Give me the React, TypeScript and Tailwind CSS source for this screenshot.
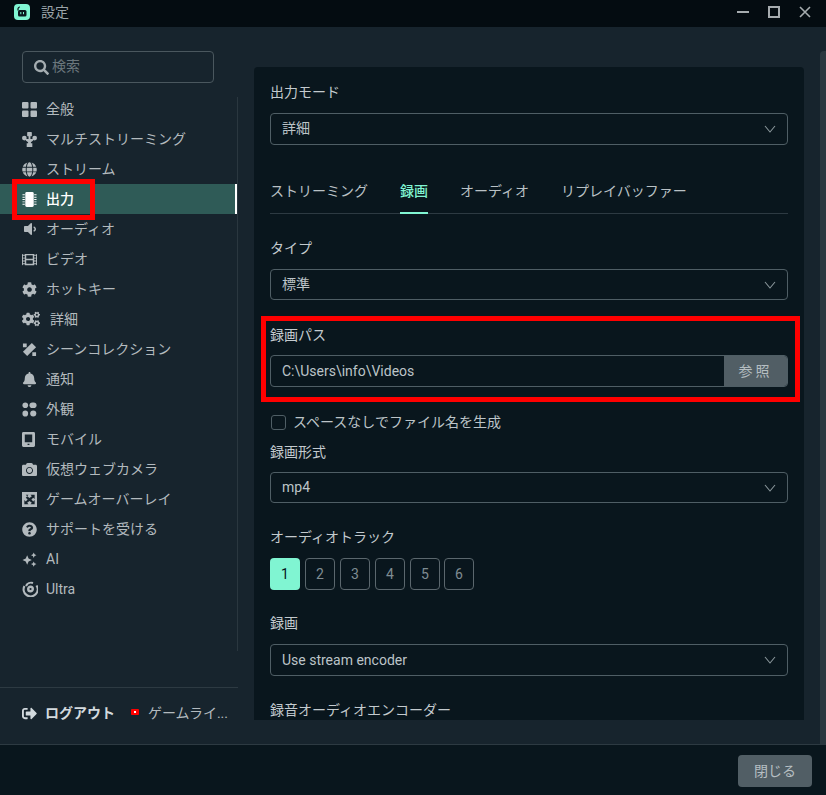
import type { ReactNode } from "react";
import {
  FaBell,
  FaCamera,
  FaCog,
  FaCogs,
  FaFilm,
  FaGlobe,
  FaQuestionCircle,
  FaSearch,
  FaSignOutAlt,
  FaVolumeDown,
} from "react-icons/fa";

const font = "font-['Roboto','Noto_Sans_CJK_JP',sans-serif]";

function General() {
  return (
    <svg viewBox="0 0 15 15" className="h-[15px] w-[15px]" fill="currentColor">
      <rect x="0" y="0" width="6.500" height="6.500" rx="1" />
      <rect x="8.500" y="0" width="6.500" height="6.500" rx="1" />
      <rect x="0" y="8.500" width="6.500" height="6.500" rx="1" />
      <rect x="8.500" y="8.500" width="6.500" height="6.500" rx="1" />
    </svg>
  );
}

function Multistream() {
  return (
    <svg viewBox="0 0 16 16" className="h-[15px] w-[15px]" fill="currentColor">
      <rect x="5.500" y="0" width="5" height="4.500" rx="0.500" />
      <circle cx="2.500" cy="6.500" r="2.500" />
      <circle cx="13.500" cy="6.500" r="2.500" />
      <path d="M7 4h2v3.500h3V9l-2.500 2v1H11v4H5v-4h1.500v-1L4 9V7.500h3z" />
    </svg>
  );
}

function Chip() {
  return (
    <svg viewBox="0 0 16 16" className="h-[15px] w-[15px]" fill="currentColor">
      <rect x="3.500" y="0" width="9" height="16" rx="1.500" />
      <path d="M0.500 2.500h2.500v1H0.500zM0.500 5h2.500v1H0.500zM0.500 7.500h2.500v1H0.500zM0.500 10h2.500v1H0.500zM0.500 12.500h2.500v1H0.500zM13 2.500h2.500v1H13zM13 5h2.500v1H13zM13 7.500h2.500v1H13zM13 10h2.500v1H13zM13 12.500h2.500v1H13z" />
    </svg>
  );
}

function Scenes() {
  return (
    <svg viewBox="0 0 16 16" className="h-[15px] w-[15px]" fill="currentColor">
      <path d="M10.500 1l4.500 4.500L5.500 15 1 10.500z" />
      <path d="M1 1.500h4v4H1zM11 11h4v4h-4z" />
    </svg>
  );
}

function Appearance() {
  return (
    <svg viewBox="0 0 16 16" className="h-[15px] w-[15px]" fill="currentColor">
      <circle cx="3.500" cy="3.500" r="3" />
      <rect x="8" y="0.500" width="7.500" height="6" rx="3" />
      <rect x="0.500" y="9" width="6" height="6.500" rx="3" />
      <circle cx="12" cy="12.250" r="3.250" />
    </svg>
  );
}

function Tablet() {
  return (
    <svg viewBox="0 0 14 16" className="h-[15px] w-[13px]" fill="currentColor">
      <path
        fillRule="evenodd"
        d="M1.500 0h11A1.500 1.500 0 0 1 14 1.500v13a1.500 1.500 0 0 1-1.500 1.500h-11A1.500 1.500 0 0 1 0 14.500v-13A1.500 1.500 0 0 1 1.500 0zM3 2.500V11h8V2.500zM6 12.500v1.500h2v-1.500z"
      />
    </svg>
  );
}

function Overlay() {
  return (
    <svg viewBox="0 0 16 16" className="h-[15px] w-[15px]" fill="currentColor">
      <path
        fillRule="evenodd"
        d="M0 0h16v16H0zM4 3l1.500 1.500L4 6l2 2-2 2-1.500-1.500V13h4.500L5.500 11.500 8 9.500l2.500 2L9 13h4.500V8.500L12 10l-2-2 2-2 1.500 1.500V3H9l1.500 1.500L8 6.500l-2.500-2L7 3z"
      />
    </svg>
  );
}

function Sparkles() {
  return (
    <svg viewBox="0 0 16 16" className="h-[15px] w-[15px]" fill="currentColor">
      <path d="M5.500 3.500l1.500 3.500 3.500 1.500-3.500 1.500-1.500 3.500L4 10 0.500 8.500 4 7z" />
      <path d="M12.500 0.500l0.900 2 2 0.900-2 0.900-0.900 2-0.900-2-2-0.900 2-0.900z" />
      <path d="M12.500 10l0.900 2 2 0.900-2 0.900-0.900 2-0.900-2-2-0.900 2-0.900z" />
    </svg>
  );
}

function Ultra() {
  return (
    <svg viewBox="0 0 16 16" className="h-[16px] w-[16px]" fill="none" stroke="currentColor">
      <circle cx="8.500" cy="8" r="2.300" strokeWidth="2.400" />
      <path d="M2.500 5A7 7 0 1 0 14.500 4.500" strokeWidth="2.200" />
      <path d="M4 5A5.500 5.500 0 0 1 11 2" strokeWidth="2" />
    </svg>
  );
}

function Chevron() {
  return (
    <svg viewBox="0 0 12 8" className="h-[8px] w-[12px] text-[#8a969b]" fill="none" stroke="currentColor" strokeWidth="1.100">
      <path d="M1 1l5 6 5-6" />
    </svg>
  );
}

const navItems: { label: string; icon: ReactNode; active?: boolean; indent?: boolean }[] = [
  { label: "全般", icon: <General /> },
  { label: "マルチストリーミング", icon: <Multistream /> },
  { label: "ストリーム", icon: <FaGlobe size={15} /> },
  { label: "出力", icon: <Chip />, active: true },
  { label: "オーディオ", icon: <FaVolumeDown size={16} /> },
  { label: "ビデオ", icon: <FaFilm size={15} /> },
  { label: "ホットキー", icon: <FaCog size={15} /> },
  { label: "詳細", icon: <FaCogs size={18} />, indent: true },
  { label: "シーンコレクション", icon: <Scenes /> },
  { label: "通知", icon: <FaBell size={15} /> },
  { label: "外観", icon: <Appearance /> },
  { label: "モバイル", icon: <Tablet /> },
  { label: "仮想ウェブカメラ", icon: <FaCamera size={15} /> },
  { label: "ゲームオーバーレイ", icon: <Overlay /> },
  { label: "サポートを受ける", icon: <FaQuestionCircle size={15} /> },
  { label: "AI", icon: <Sparkles /> },
  { label: "Ultra", icon: <Ultra /> },
];

function Label({ children, className }: { children: ReactNode; className: string }) {
  return <div className={`h-[20px] text-[14px] leading-[20px] text-[#c3cace] ${className}`}>{children}</div>;
}

function Select({ value, className }: { value: string; className?: string }) {
  return (
    <div
      className={`flex h-[32px] items-center justify-between rounded-[4px] border border-[#4f5e65] pl-[11px] pr-[11px] text-[14px] text-[#bcc4c8] ${className ?? ""}`}
    >
      <span>{value}</span>
      <Chevron />
    </div>
  );
}

export default function App() {
  return (
    <div className={`relative flex h-[795px] w-[826px] flex-col overflow-hidden bg-[#17242d] ${font}`}>
      {/* title bar */}
      <div className="flex h-[27px] shrink-0 items-center justify-between bg-[#040c11] pb-[3px] pl-[14px] pr-[15px]">
        <div className="flex items-center gap-[11px]">
          <svg viewBox="0 0 16 16" className="h-[16px] w-[16px]">
            <rect width="16" height="16" rx="4" fill="#80f5d2" />
            <path d="M4 6.500V5a2 2 0 0 1 2-2" stroke="#09161d" fill="none" strokeWidth="1.200" />
            <rect x="4" y="6" width="8.500" height="6.500" rx="1.500" fill="#09161d" />
            <rect x="6.300" y="8" width="1" height="2.200" fill="#80f5d2" />
            <rect x="9" y="8" width="1" height="2.200" fill="#80f5d2" />
          </svg>
          <span className="text-[14px] text-[#9aa3a8]">設定</span>
        </div>
        <div className="flex items-center gap-[19px] text-[#a6acaf]">
          <div className="h-[2px] w-[12px] bg-current" />
          <div className="h-[12px] w-[12px] border-2 border-current" />
          <svg viewBox="0 0 12 12" className="h-[12px] w-[12px]" stroke="currentColor" strokeWidth="1.600">
            <path d="M1 1l10 10M11 1L1 11" />
          </svg>
        </div>
      </div>

      {/* body */}
      <div className="flex h-[717px] shrink-0">
        <aside className="flex w-[238px] shrink-0 flex-col">
          <div className="ml-[22px] mt-[24px] flex h-[32px] w-[192px] items-center gap-[3px] rounded-[4px] border border-[#4a575e] pl-[11px] text-[14px] text-[#6b777d]">
            <FaSearch size={15} className="text-[#a4acb0]" />
            <span className="-translate-y-px">検索</span>
          </div>
          <div className="mt-[10px] flex h-[554px] flex-col">
            <nav className="mt-[1px]">
              {navItems.map((item) => (
                <div
                  key={item.label}
                  className={`relative flex h-[30px] items-center pl-[22px] text-[14px] ${
                    item.active ? "bg-[#2f5b57] font-medium text-white" : "text-[#b3babe]"
                  }`}
                >
                  <span className="flex w-[24px] shrink-0 items-center">{item.icon}</span>
                  <span className={item.indent ? "ml-[4px]" : ""}>{item.label}</span>
                  {item.active && <span className="absolute right-0 top-0 h-full w-[3px] bg-white" />}
                </div>
              ))}
            </nav>
          </div>
          <div className="mt-[40px] flex h-[52px] items-center border-t border-[#2d3a42] pl-[22px] text-[14px]">
            <FaSignOutAlt size={15} className="mr-[8px] shrink-0 text-[#d3dade]" />
            <span className="font-bold text-[#d3dade]">ログアウト</span>
            <span className="ml-[16px] mr-[9px] flex h-[6px] w-[8px] -translate-y-[2px] items-center justify-center rounded-[1px] bg-[#ff0000]">
              <span className="h-[2px] w-[2px] bg-white" />
            </span>
            <span className="text-[#b3babe]">ゲームライ...</span>
          </div>
        </aside>

        {/* divider beside the nav list */}
        <div className="mt-[70px] h-[554px] w-px shrink-0 -translate-x-px bg-[#2a373f]" />

        <main className="ml-[15px] mt-[40px] flex h-[653px] w-[550px] shrink-0 flex-col overflow-hidden rounded-t-[4px] bg-[#09161d] px-[16px]">
          <Label className="mt-[15px]">出力モード</Label>
          <Select value="詳細" className="mt-[11px]" />

          <div className="mt-[32px] flex h-[38px] gap-[32px] border-b border-[#2d3a42] text-[14px] text-[#b9c1c5]">
            <span className="leading-[28px]">ストリーミング</span>
            <span className="-mb-px border-b-2 border-[#80f5d2] font-medium leading-[28px] text-[#80f5d2]">録画</span>
            <span className="leading-[28px]">オーディオ</span>
            <span className="leading-[28px]">リプレイバッファー</span>
          </div>

          <Label className="mt-[24px]">タイプ</Label>
          <Select value="標準" className="mt-[11px]" />

          <Label className="mt-[25px]">録画パス</Label>
          <div className="mt-[10px] flex h-[32px] overflow-hidden rounded-[4px] border border-[#4f5e65] text-[14px]">
            <div className="flex flex-1 items-center pl-[11px] text-[#bcc4c8]">C:\Users\info\Videos</div>
            <div className="flex w-[63px] items-center justify-center bg-[#515e65] tracking-[3px] text-[#b6bec2]">参照</div>
          </div>

          <div className="mt-[27px] flex h-[18px] items-center text-[14px] text-[#bcc4c8]">
            <span className="ml-px mr-[7px] h-[15px] w-[15px] rounded-[3px] border border-[#4f5e65]" />
            スペースなしでファイル名を生成
          </div>
          <Label className="mt-[10px]">録画形式</Label>
          <Select value="mp4" className="mt-[10px]" />

          <Label className="mt-[24px]">オーディオトラック</Label>
          <div className="mt-[11px] flex gap-[5px] text-[14px] text-[#7f8c92]">
            <div className="flex h-[32px] w-[30px] items-center justify-center rounded-[4px] bg-[#80f5d2] text-[#09161d]">1</div>
            {["2", "3", "4", "5"].map((n) => (
              <div key={n} className="flex h-[32px] w-[30px] items-center justify-center rounded-[4px] border border-[#5b676d]">
                {n}
              </div>
            ))}
            <div className="-ml-px flex h-[32px] w-[30px] items-center justify-center rounded-[4px] border border-[#5b676d]">6</div>
          </div>

          <Label className="mt-[23px]">録画</Label>
          <Select value="Use stream encoder" className="mt-[11px]" />

          <Label className="mt-[24px] shrink-0">録音オーディオエンコーダー</Label>
        </main>

        {/* scrollbar */}
        <div className="ml-[16px] mt-[24px] h-[693px] w-[6px] shrink-0 rounded-tl-[4px] bg-[#2a373f]" />
      </div>

      {/* footer */}
      <div className="flex flex-1 items-start justify-end border-t border-[#2d3a42] bg-[#09161d] pr-[14px] pt-[10px]">
        <div className="flex h-[32px] w-[74px] items-center justify-center rounded-[4px] bg-[#515e65] text-[14px] text-[#b6bec2]">閉じる</div>
      </div>

      {/* red annotation boxes */}
      <div className="absolute left-[12px] top-[179px] h-[41px] w-[83px] border-[5px] border-[#ff0000]" />
      <div className="absolute left-[261px] top-[316px] h-[86px] w-[539px] border-[5px] border-[#ff0000]" />
    </div>
  );
}
